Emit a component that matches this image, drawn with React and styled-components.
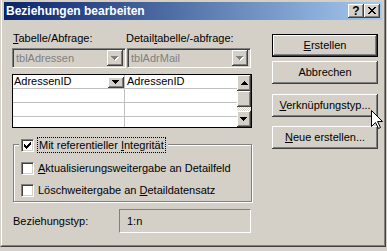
import React from 'react';
import styled, { createGlobalStyle } from 'styled-components';

const FACE = '#D4D0C8';

const Global = createGlobalStyle`
  html, body { margin: 0; padding: 0; background: ${FACE}; }
  body {
    width: 387px; height: 251px; overflow: hidden;
    font-family: "Liberation Sans", Arial, sans-serif;
    font-size: 11px; color: #000;
  }
  * { box-sizing: border-box; }
`;

const Window = styled.div`
  position: relative;
  margin-top: -2px;
  width: 386px;
  height: 249px;
  border: 1px solid;
  border-color: ${FACE} #404040 #404040 ${FACE};
  background: ${FACE};
`;

const Frame = styled.div`
  height: 100%;
  border: 1px solid;
  border-color: #fff #808080 #808080 #fff;
  padding: 2px;
  display: flex;
  flex-direction: column;
`;

const Caption = styled.div`
  height: 18px;
  flex: none;
  display: flex;
  align-items: center;
  padding: 0 2px 0 2px;
  background: linear-gradient(to right, #0A246A, #A6CAF0);
`;

const CaptionTitle = styled.div`
  flex: 1;
  color: #fff;
  font-weight: bold;
  font-size: 12px;
  line-height: 18px;
  white-space: nowrap;
`;

const raised = `
  background: ${FACE};
  box-shadow: inset -1px -1px #404040, inset 1px 1px #fff, inset -2px -2px #808080;
`;

const CapButton = styled.div`
  width: 16px;
  height: 14px;
  ${raised}
  display: flex;
  align-items: center;
  justify-content: center;
  font-weight: bold;
  font-size: 12px;
  line-height: 14px;
  padding-bottom: 1px;
`;

const Client = styled.div`
  flex: 1;
  margin-top: 1px;
  display: flex;
  padding-left: 8px;
`;

const LeftCol = styled.div`
  width: 240px;
  padding-top: 11px;
  display: flex;
  flex-direction: column;
`;

const LabelRow = styled.div`
  display: grid;
  grid-template-columns: 114px 1fr;
  height: 13px;
  line-height: 13px;
`;

const Label = styled.div`
  padding-left: ${p => p.$indent || 0}px;
  white-space: nowrap;
`;

const ComboRow = styled.div`
  display: flex;
  gap: 1px;
  margin-top: 3px;
`;

const Combo = styled.div`
  width: ${p => p.$w}px;
  height: 20px;
  border: 1px solid;
  border-color: #808080 #fff #fff #808080;
  box-shadow: inset 1px 1px #404040, inset -1px -1px ${FACE};
  background: ${FACE};
  padding: 2px;
  display: flex;
  align-items: center;
  color: #808080;
`;

const ComboText = styled.div`
  flex: 1;
  padding-left: 1px;
  line-height: 13px;
`;

const DropBtn = styled.div`
  width: 16px;
  height: ${p => p.$h || 16}px;
  ${raised}
  display: flex;
  align-items: center;
  justify-content: center;
  flex: none;
`;

const Grid = styled.div`
  margin-top: 6px;
  width: 240px;
  height: 54px;
  border: 1px solid #000;
  background: #fff;
  display: flex;
`;

const GridBody = styled.div`
  flex: 1;
  display: grid;
  grid-template-columns: 112px 112px;
  grid-auto-rows: 14px;
  overflow: hidden;
`;

const Cell = styled.div`
  border-bottom: 1px solid #C0C0C0;
  border-right: ${p => (p.$first ? '1px solid #C0C0C0' : 'none')};
  padding-left: ${p => (p.$first ? 1 : 2)}px;
  line-height: 13px;
  display: flex;
  align-items: flex-start;
  white-space: nowrap;
`;

const CellText = styled.span`
  flex: 1;
`;

const CellDrop = styled.div`
  width: 16px;
  height: 11px;
  margin-top: 2px;
  ${raised}
  display: flex;
  align-items: center;
  justify-content: center;
`;

const ScrollBar = styled.div`
  width: 14px;
  display: flex;
  flex-direction: column;
`;

const ScrollBtn = styled.div`
  height: 16px;
  ${raised}
  display: flex;
  align-items: center;
  justify-content: center;
`;

const Track = styled.div`
  flex: 1;
  background: repeating-conic-gradient(#fff 0 25%, ${FACE} 0 50%) 0 0 / 2px 2px;
`;

const GroupBox = styled.div`
  margin: 16px 0 0 1px;
  width: 239px;
  height: 58px;
  border: 1px solid #808080;
  box-shadow: inset 1px 1px #fff, 1px 1px #fff;
  display: flex;
  flex-direction: column;
`;

const Legend = styled.div`
  margin: -8px 0 0 5px;
  padding: 0 2px;
  width: fit-content;
  height: 16px;
  background: ${FACE};
  display: flex;
  align-items: flex-start;
`;

const CheckRow = styled.div`
  display: flex;
  align-items: center;
  height: 13px;
  margin: 9px 0 0 7px;
`;

const CheckBox = styled.div`
  width: 13px;
  height: 13px;
  flex: none;
  margin-top: ${p => p.$mt || 0}px;
  border: 1px solid;
  border-color: #808080 #fff #fff #808080;
  box-shadow: inset 1px 1px #404040, inset -1px -1px ${FACE};
  background: #fff;
  display: flex;
  align-items: center;
  justify-content: center;
`;

const CheckLabel = styled.div`
  margin-left: ${p => p.$ml}px;
  line-height: 13px;
  white-space: nowrap;
`;

const FocusLabel = styled.div`
  margin-left: 3px;
  height: 16px;
  border: 1px dotted #000;
  padding: 0 1px 0 1px;
  line-height: 14px;
  white-space: nowrap;
`;

const TypeRow = styled.div`
  margin: 7px 0 0 1px;
  display: flex;
  align-items: center;
  height: 24px;
`;

const TypeLabel = styled.div`
  width: 106px;
`;

const TypeBox = styled.div`
  width: 132px;
  height: 24px;
  border: 1px solid;
  border-color: #808080 #fff #fff #808080;
  padding-left: 7px;
  display: flex;
  align-items: center;
`;

const RightCol = styled.div`
  margin-left: 20px;
  width: 106px;
  padding-top: 13px;
  display: flex;
  flex-direction: column;
`;

const Button = styled.div`
  height: 23px;
  margin-top: ${p => p.$mt || 0}px;
  ${raised}
  ${p => p.$default ? `
    border: 1px solid #000;
  ` : ''}
  display: flex;
  align-items: center;
  justify-content: center;
  line-height: 13px;
  white-space: nowrap;
`;

const Cursor = styled.svg`
  position: absolute;
  left: 370px;
  top: 111px;
`;

const U = styled.span`
  text-decoration: underline;
  text-underline-offset: 1px;
`;

const ArrowDown = ({ disabled }) => (
  <svg width="8" height="5" viewBox="0 0 8 5" shapeRendering="crispEdges">
    {disabled && <path d="M1 1h7v1H1zM2 2h5v1H2zM3 3h3v1H3zM4 4h1v1H4z" fill="#fff" />}
    <path d="M0 0h7v1H0zM1 1h5v1H1zM2 2h3v1H2zM3 3h1v1H3z" fill={disabled ? '#808080' : '#000'} />
  </svg>
);

const ArrowUp = () => (
  <svg width="7" height="4" viewBox="0 0 7 4" shapeRendering="crispEdges">
    <path d="M3 0h1v1H3zM2 1h3v1H2zM1 2h5v1H1zM0 3h7v1H0z" fill="#000" />
  </svg>
);

const CloseGlyph = () => (
  <svg width="8" height="7" viewBox="0 0 8 7" shapeRendering="crispEdges">
    <path
      d="M0 0h2v1H0zM6 0h2v1H6zM1 1h2v1H1zM5 1h2v1H5zM2 2h4v1H2zM3 3h2v1H3zM2 4h4v1H2zM1 5h2v1H1zM5 5h2v1H5zM0 6h2v1H0zM6 6h2v1H6z"
      fill="#000"
    />
  </svg>
);

const CheckMark = () => (
  <svg width="7" height="7" viewBox="0 0 7 7" shapeRendering="crispEdges">
    <path
      d="M6 0h1v1H6zM5 1h2v1H5zM0 2h1v1H0zM4 2h3v1H4zM0 3h2v1H0zM3 3h3v1H3zM0 4h5v1H0zM1 5h3v1H1zM2 6h1v1H2z"
      fill="#000"
    />
  </svg>
);

export default function App() {
  return (
    <>
      <Global />
      <Window>
        <Frame>
          <Caption>
            <CaptionTitle>Beziehungen bearbeiten</CaptionTitle>
            <CapButton>?</CapButton>
            <CapButton><CloseGlyph /></CapButton>
          </Caption>
          <Client>
            <LeftCol>
              <LabelRow>
                <Label $indent={1}><U>T</U>abelle/Abfrage:</Label>
                <Label>Detail<U>t</U>abelle/-abfrage:</Label>
              </LabelRow>
              <ComboRow>
                <Combo $w={114}>
                  <ComboText>tblAdressen</ComboText>
                  <DropBtn><ArrowDown disabled /></DropBtn>
                </Combo>
                <Combo $w={124}>
                  <ComboText>tblAdrMail</ComboText>
                  <DropBtn><ArrowDown disabled /></DropBtn>
                </Combo>
              </ComboRow>
              <Grid>
                <GridBody>
                  <Cell $first>
                    <CellText>AdressenID</CellText>
                    <CellDrop><ArrowDown /></CellDrop>
                  </Cell>
                  <Cell><CellText>AdressenID</CellText></Cell>
                  <Cell $first />
                  <Cell />
                  <Cell $first />
                  <Cell />
                  <Cell $first />
                  <Cell />
                </GridBody>
                <ScrollBar>
                  <ScrollBtn><ArrowUp /></ScrollBtn>
                  <ScrollBtn />
                  <Track />
                  <ScrollBtn><ArrowDown /></ScrollBtn>
                </ScrollBar>
              </Grid>
              <GroupBox>
                <Legend>
                  <CheckBox $mt={2}><CheckMark /></CheckBox>
                  <FocusLabel>Mit referentieller <U>I</U>ntegrität</FocusLabel>
                </Legend>
                <CheckRow>
                  <CheckBox />
                  <CheckLabel $ml={4}><U>A</U>ktualisierungsweitergabe an Detailfeld</CheckLabel>
                </CheckRow>
                <CheckRow>
                  <CheckBox />
                  <CheckLabel $ml={4}>Löschweitergabe an <U>D</U>etaildatensatz</CheckLabel>
                </CheckRow>
              </GroupBox>
              <TypeRow>
                <TypeLabel>Beziehungstyp:</TypeLabel>
                <TypeBox>1:n</TypeBox>
              </TypeRow>
            </LeftCol>
            <RightCol>
              <Button $default><span><U>E</U>rstellen</span></Button>
              <Button $mt={4}>Abbrechen</Button>
              <Button $mt={10}><span><U>V</U>erknüpfungstyp...</span></Button>
              <Button $mt={9}><span><U>N</U>eue erstellen...</span></Button>
            </RightCol>
          </Client>
        </Frame>
        <Cursor width="12" height="19" viewBox="0 0 12 19">
          <path
            d="M0.5 0.5 L0.5 16.5 L4.5 12.5 L7.5 18.5 L9.5 17.5 L6.5 11.5 L11.5 11.5 Z"
            fill="#fff"
            stroke="#000"
            strokeWidth="1"
          />
        </Cursor>
      </Window>
    </>
  );
}
